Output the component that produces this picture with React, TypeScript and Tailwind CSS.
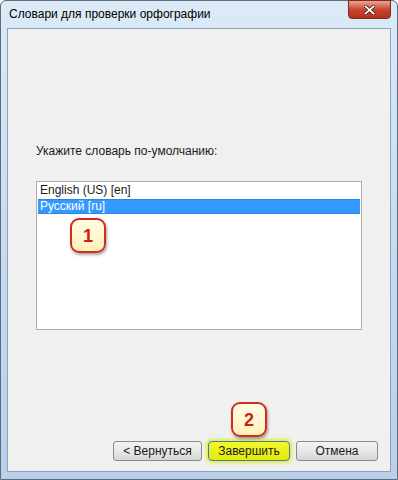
import React from "react";

const font = { fontFamily: '"Liberation Sans", Arial, sans-serif' };

function Badge({ n }: { n: string }) {
  return (
    <div className="w-[36px] h-[35px] rounded-[9px] border-2 border-[#d42a22] bg-gradient-to-b from-[#fffde6] to-[#fff1b8] shadow-[1px_2px_3px_rgba(0,0,0,0.35)] flex items-center justify-center">
      <span className="text-[18px] font-bold text-[#d01c16] leading-none">{n}</span>
    </div>
  );
}

function Btn({ label, primary, w }: { label: string; primary?: boolean; w: string }) {
  return (
    <button
      className={
        (primary
          ? "rounded-[4px] border border-[#3c7fb1] bg-gradient-to-b from-[#f4f72a] to-[#e4e80c] shadow-[0_0_3px_2px_rgba(230,235,20,0.8)] "
          : "rounded-[3px] border border-[#8a8a8a] bg-gradient-to-b from-[#f4f4f4] via-[#e8e8e8] to-[#d6d6d6] ") +
        "h-[20px] text-[12px] leading-[18px] text-[#1a1a1a] " +
        w
      }
    >
      {label}
    </button>
  );
}

export default function App() {
  return (
    <div className="w-[398px] h-[480px] bg-white" style={font}>
      <div className="w-full h-full flex flex-col rounded-t-[6px] border border-[#5f6b78] bg-gradient-to-b from-[#dceaf7] via-[#c7dcf1] to-[#b8d0ea] px-[6px] pb-[7px]">
        {/* title bar */}
        <div className="relative h-[27px] flex items-center">
          <span className="pl-[2px] pb-[1px] text-[12px] text-black">Словари для проверки орфографии</span>
          <div className="absolute right-[0px] top-[-1px] w-[43px] h-[19px] rounded-b-[4px] border border-[#7a2a22] bg-gradient-to-b from-[#e8a597] via-[#c9452f] to-[#b8301c] flex items-center justify-center">
            <svg width="11" height="10" viewBox="0 0 11 10">
              <path d="M1.5 1.5 L9.5 8.5 M9.5 1.5 L1.5 8.5" stroke="#3a1410" strokeWidth="3.2" strokeLinecap="square" />
              <path d="M1.5 1.5 L9.5 8.5 M9.5 1.5 L1.5 8.5" stroke="#ffffff" strokeWidth="1.8" strokeLinecap="square" />
            </svg>
          </div>
        </div>

        {/* client area */}
        <div className="relative flex-1 flex flex-col border border-[#8da3bb] bg-[#f0f0f0]">
          <div className="pt-[114px] pl-[28px] text-[12px] text-[#1a1a1a] leading-[16px]">
            Укажите словарь по-умолчанию:
          </div>

          <div className="relative mt-[22px] ml-[28px] w-[326px] h-[149px] border border-[#acacac] bg-white pt-[1px] px-[1px] text-[12px] leading-[15px]">
            <div className="h-[16px] pl-[2px] text-[#1a1a1a]">English (US) [en]</div>
            <div className="h-[15px] pl-[2px] bg-[#3399ff] border-y border-[#2f86e0] text-white leading-[13px]">Русский [ru]</div>
            <div className="absolute left-[33px] top-[36px]">
              <Badge n="1" />
            </div>
          </div>

          <div className="flex-1" />

          <div className="relative flex justify-end gap-[6px] pr-[12px] pb-[10px]">
            <div className="absolute left-[223px] top-[-39px]">
              <Badge n="2" />
            </div>
            <Btn label="< Вернуться" w="w-[89px]" />
            <Btn label="Завершить" primary w="w-[82px]" />
            <Btn label="Отмена" w="w-[82px]" />
          </div>
        </div>
      </div>
    </div>
  );
}
